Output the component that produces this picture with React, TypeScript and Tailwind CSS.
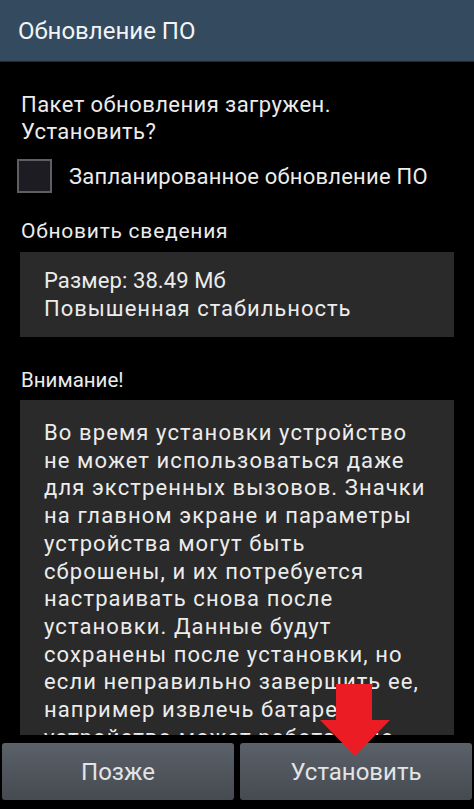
import React from 'react'

const warning = [
  'Во время установки устройство',
  'не может использоваться даже',
  'для экстренных вызовов. Значки',
  'на главном экране и параметры',
  'устройства могут быть',
  'сброшены, и их потребуется',
  'настраивать снова после',
  'установки. Данные будут',
  'сохранены после установки, но',
  'если неправильно завершить ее,',
  'например извлечь батарею,',
  'устройство может работать не',
]

function Arrow() {
  return (
    <svg
      className="absolute left-[318px] top-[684px] pointer-events-none"
      width="74"
      height="74"
      viewBox="0 0 74 74"
    >
      <path d="M18 0 H54 V36 H72 L37 72 L2 36 H18 Z" fill="#ec1c24" />
    </svg>
  )
}

export default function App() {
  return (
    <div
      className="relative w-[474px] h-[809px] bg-black text-[#ececec] overflow-hidden"
      style={{ fontFamily: 'Roboto, "Noto Sans", sans-serif' }}
    >
      <div className="h-[62px] bg-[#344a5e] border-b border-[#1d2935] flex items-center px-[18px]">
        <span className="text-[24px] text-[#f2f4f6]">Обновление ПО</span>
      </div>

      <div className="px-[20px]">
        <p className="pt-[29px] text-[22px] leading-[27px] tracking-[0.02em] pl-px">
          Пакет обновления загружен.
          <br />
          Установить?
        </p>

        <div className="mt-[14px] flex items-center gap-[17px]">
          <div className="w-[35px] h-[34px] -ml-[3px] bg-[#1c1c22] border-2 border-[#5f5f62]" />
          <span className="text-[22px] tracking-[0.01em]">Запланированное обновление ПО</span>
        </div>

        <p className="mt-[24px] text-[21px] leading-[29px] tracking-[0.036em] pl-px">Обновить сведения</p>

        <div className="mt-[6px] bg-[#2a2a2a] h-[85px] px-[24px] pt-[15px] text-[22px] leading-[28px]">
          <p className="tracking-[0.005em]">Размер: 38.49 Мб</p>
          <p className="tracking-[0.045em]">Повышенная стабильность</p>
        </div>

        <p className="mt-[29px] text-[20.5px] leading-[29px] pl-px">Внимание!</p>

        <div className="mt-[5px] bg-[#2a2a2a] h-[335px] overflow-hidden px-[24px] pt-[19px] text-[22px] leading-[27.7px] tracking-[0.05em]">
          {warning.map((line) => (
            <p key={line} className="whitespace-nowrap">
              {line}
            </p>
          ))}
        </div>
      </div>

      <div className="mt-[8px] flex gap-[6px] px-[2px]">
        <button className="flex-1 h-[57px] rounded-[3px] bg-gradient-to-b from-[#5b6169] to-[#464b52] text-[24px] text-[#e2e4e6]">
          Позже
        </button>
        <button className="flex-1 h-[57px] rounded-[3px] bg-gradient-to-b from-[#5b6169] to-[#464b52] text-[24px] text-[#e2e4e6]">
          Установить
        </button>
      </div>

      <Arrow />
    </div>
  )
}
